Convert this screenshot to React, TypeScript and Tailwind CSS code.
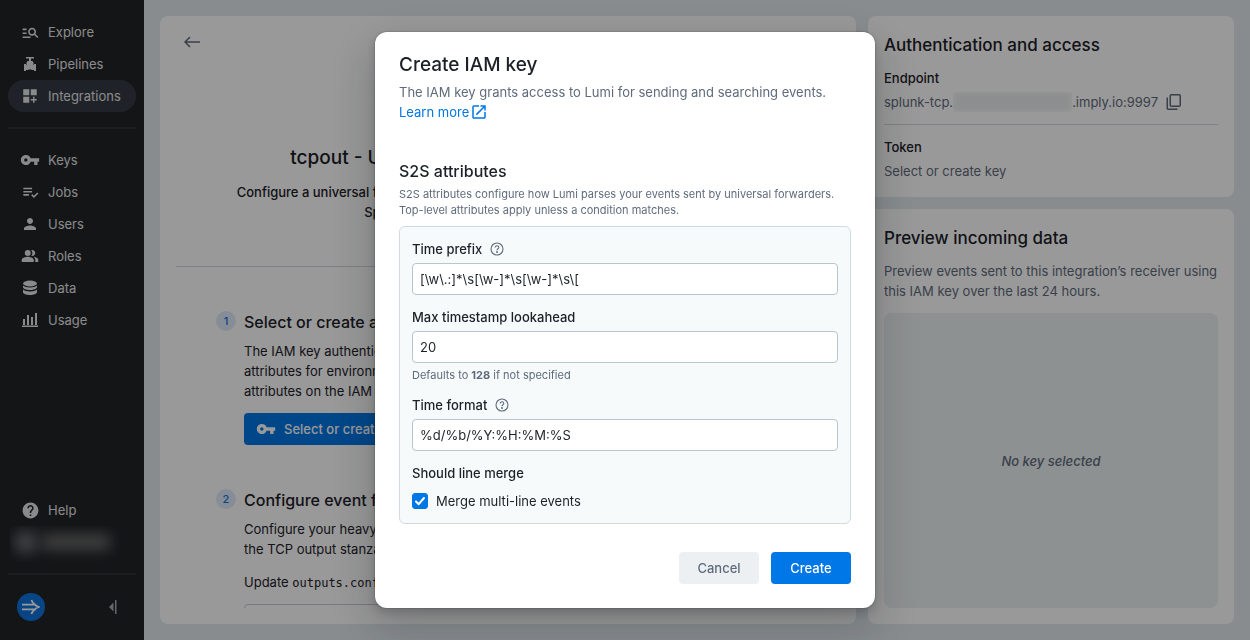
import type { ReactNode } from 'react'
import {
  MdDashboardCustomize,
  MdHelp,
  MdManageSearch,
  MdOpenInNew,
  MdPeopleAlt,
  MdPerson,
  MdPlaylistAddCheck,
  MdVpnKey,
} from 'react-icons/md'

const PipelineIcon = () => (
  <svg viewBox="0 0 16 16" className="size-4" fill="currentColor" aria-hidden="true">
    <path d="M4 1h8v1.500H9V5h1.500l1 1.500V9H12V8h2v7h-2v-1H9.500v-.5h-3v.5H4v1H2V8h2v1h.5V6.500L5.500 5H7V2.500H4z" />
  </svg>
)

const DataIcon = () => (
  <svg viewBox="0 0 16 16" className="size-4" fill="currentColor" aria-hidden="true">
    <ellipse cx="8" cy="3.500" rx="7" ry="2.900" />
    <path d="M1 5.500c1.200 1.300 3.900 2 7 2s5.800-.7 7-2v1.800c0 1.500-3.100 2.700-7 2.700S1 8.800 1 7.300z" />
    <path d="M1 9.600c1.200 1.200 3.900 1.900 7 1.900s5.800-.7 7-1.900v2.700c0 1.500-3.100 2.700-7 2.700s-7-1.200-7-2.700z" />
  </svg>
)

const UsageIcon = () => (
  <svg viewBox="0 0 16 16" className="size-4" fill="currentColor" aria-hidden="true">
    <path d="M0 13.500h16V15H0zM1 7h2v6H1zM5 3h2v10H5zM9 5h2v8H9zM13 1h2v12h-2z" />
  </svg>
)

const CopyIcon = () => (
  <svg viewBox="0 0 16 16" className="size-4" fill="none" stroke="currentColor" strokeWidth="1.500" aria-hidden="true">
    <rect x="4.250" y=".75" width="10" height="11.500" rx="1" />
    <path d="M1.250 3.500v10.750c0 .6.4 1 1 1H11.500" />
  </svg>
)

const HelpCircle = () => (
  <svg viewBox="0 0 14 14" className="size-3.5 text-[#5f6b7c]" fill="none" stroke="currentColor" strokeWidth="1.100" aria-hidden="true">
    <circle cx="7" cy="7" r="6" />
    <path d="M5.200 5.600c0-1 .8-1.800 1.800-1.800s1.800.7 1.800 1.700c0 1.200-1.800 1.400-1.800 2.700" />
    <circle cx="7" cy="10" r=".4" fill="currentColor" />
  </svg>
)

const mainNav = [
  { name: 'Explore', icon: <MdManageSearch className="size-[19px]" /> },
  { name: 'Pipelines', icon: <PipelineIcon /> },
  { name: 'Integrations', icon: <MdDashboardCustomize className="size-[18px]" />, active: true },
]

const adminNav = [
  { name: 'Keys', icon: <MdVpnKey className="size-5" /> },
  { name: 'Jobs', icon: <MdPlaylistAddCheck className="size-[19px]" /> },
  { name: 'Users', icon: <MdPerson className="size-[18px]" /> },
  { name: 'Roles', icon: <MdPeopleAlt className="size-[18px]" /> },
  { name: 'Data', icon: <DataIcon /> },
  { name: 'Usage', icon: <UsageIcon /> },
]

function NavItem({ name, icon, active }: { name: string; icon: ReactNode; active?: boolean }) {
  return (
    <a
      href="#"
      className={`flex h-8 items-center gap-2 rounded-full pl-3 text-[13px] leading-5 ${active ? 'bg-[#343a44]' : ''}`}
    >
      <span className="flex w-5 justify-center">{icon}</span>
      {name}
    </a>
  )
}

function Sidebar() {
  return (
    <nav className="flex w-36 shrink-0 flex-col bg-[#212327] px-2 pt-4 pb-[19px] text-[#e6e6e6]">
      {mainNav.map((item) => (
        <NavItem key={item.name} {...item} />
      ))}
      <hr className="my-[15px] border-t-2 border-[#303236]" />
      {adminNav.map((item) => (
        <NavItem key={item.name} {...item} />
      ))}
      <div className="mt-auto">
        <NavItem name="Help" icon={<MdHelp className="size-[19px]" />} />
        <div className="mr-4 ml-0.5 flex h-9 items-start gap-1 overflow-hidden pt-1">
          <div className="ml-1 size-6 rounded-full bg-[#6a6c70] blur-[7px]" />
          <div className="mt-1 h-4 w-[68px] bg-[#6c6c6c] blur-[7px]" />
        </div>
        <hr className="mt-[11px] border-t-2 border-[#303236]" />
        <div className="mt-[18px] flex items-center justify-between pr-[18px] pl-[9px]">
          <span className="flex size-7 items-center justify-center rounded-full bg-[#0f73dc]">
            <svg viewBox="0 0 18 16" className="h-4 w-[18px]" fill="none" stroke="#fff" strokeWidth="1.800" aria-hidden="true">
              <path d="M0 5.600h14M0 10.400h14M9.500 1c.6 2.200 3.500 5.800 7.300 7-3.800 1.200-6.700 4.800-7.300 7" />
            </svg>
          </span>
          <button type="button" aria-label="Collapse menu">
            <svg viewBox="0 0 12 16" className="h-4 w-3 text-[#a8acb3]" fill="currentColor" aria-hidden="true">
              <path d="M3 8l4.500-4.500v9zM9 1h1.500v14H9z" />
            </svg>
          </button>
        </div>
      </div>
    </nav>
  )
}

function Step({ n, title, children }: { n: number; title: string; children: ReactNode }) {
  return (
    <section className="flex gap-2">
      <span className="mt-px flex size-5 shrink-0 items-center justify-center rounded-full bg-[#e1ecfb] text-[11px] font-medium text-[#0f73dc]">
        {n}
      </span>
      <div className="min-w-0 flex-1 text-[13px] leading-5">
        <h3 className="mb-[7px] text-base leading-6 font-medium">{title}</h3>
        {children}
      </div>
    </section>
  )
}

function Guide() {
  return (
    <main className="min-w-0 flex-1 overflow-hidden rounded-lg bg-white px-4 py-4">
      <div className="h-full overflow-hidden">
        <button type="button" aria-label="Back" className="ml-2 flex h-5 items-center text-[#5f6b7c]">
          <svg viewBox="0 0 16 12" className="h-3 w-4" fill="none" stroke="currentColor" strokeWidth="1.500" aria-hidden="true">
            <path d="M16 6H1M6 1L1 6l5 5" />
          </svg>
        </button>
        <header className="mt-[94px] border-b border-[#d3d8de] pb-11 text-center">
          <h1 className="text-[19px] leading-6 font-medium">tcpout - Universal forwarder to a Splunk indexer</h1>
          <p className="mx-auto mt-3 max-w-[560px] text-[13px] leading-5 font-medium">
            Configure a universal forwarder or a heavy forwarder to send your events to Lumi using
            <br />
            Splunk-to-Splunk protocol via TCP connection
          </p>
        </header>
        <div className="mx-10 mt-[43px] flex flex-col gap-[43px]">
          <Step n={1} title="Select or create an IAM key">
            <p>
              The IAM key authenticates your forwarder with Lumi. You can use
              <br />
              attributes for environments, teams and other groups. Set these
              <br />
              attributes on the IAM key to tag the incoming events.
            </p>
            <button type="button" className="mt-3 flex h-8 items-center gap-2 rounded bg-[#0077e6] px-3 font-medium text-white">
              <MdVpnKey className="size-5" />
              Select or create IAM key
            </button>
          </Step>
          <Step n={2} title="Configure event forwarding">
            <p>
              Configure your heavy forwarder or universal forwarder, and add
              <br />
              the TCP output stanza to send events.
            </p>
            <p className="mt-[13px]">
              Update <code className="font-['DejaVu_Sans_Mono',monospace] text-xs">outputs.conf</code> as follows:
            </p>
            <div className="mt-3 h-40 rounded border border-[#c5cbd3]" />
          </Step>
        </div>
      </div>
    </main>
  )
}

function SidePanels() {
  return (
    <aside className="flex w-[366px] shrink-0 flex-col gap-3 text-[13px] leading-5">
      <section className="rounded-lg bg-white p-4">
        <h2 className="pt-px text-[17px] leading-6 font-medium">Authentication and access</h2>
        <h3 className="mt-[11px] font-medium">Endpoint</h3>
        <div className="mt-1 flex items-center text-[#5f6b7c]">
          splunk-tcp.
          <span className="w-[119px] overflow-hidden">
            <span className="block h-5 bg-[#ebedee] blur-[3px]" />
          </span>
          .imply.io:9997
          <button type="button" aria-label="Copy endpoint" className="ml-2">
            <CopyIcon />
          </button>
        </div>
        <hr className="my-3 border-[#d3d8de]" />
        <h3 className="font-medium">Token</h3>
        <p className="mt-1 text-[#5f6b7c]">Select or create key</p>
      </section>
      <section className="flex flex-1 flex-col rounded-lg bg-white p-4">
        <h2 className="pt-px text-[17px] leading-6 font-medium">Preview incoming data</h2>
        <p className="mt-[11px] text-[#5f6b7c]">
          Preview events sent to this integration’s receiver using this IAM key over the last 24 hours.
        </p>
        <div className="mt-3 flex flex-1 items-center justify-center rounded-lg bg-[#edf2f3] font-medium text-[#5f6b7c] italic">
          No key selected
        </div>
      </section>
    </aside>
  )
}

function Field({ id, label, value, help, children }: { id: string; label: string; value: string; help?: boolean; children?: ReactNode }) {
  return (
    <div>
      <div className="flex items-center gap-2">
        <label htmlFor={id} className="font-medium">
          {label}
        </label>
        {help && (
          <button type="button" aria-label={`About ${label}`}>
            <HelpCircle />
          </button>
        )}
      </div>
      <input
        id={id}
        defaultValue={value}
        className="mt-1 block h-8 w-full rounded border border-[#b8c6d0] bg-white px-[7px]"
      />
      {children}
    </div>
  )
}

function CreateKeyDialog() {
  return (
    <div className="fixed inset-0 flex items-center justify-center bg-black/40">
      <div
        role="dialog"
        aria-labelledby="dialog-title"
        className="w-full max-w-[500px] rounded-xl bg-white px-6 pt-5 pb-6 text-[13px] leading-5 shadow-[0_0_0_1px_rgba(17,20,24,0.1),0_4px_8px_rgba(17,20,24,0.2),0_18px_46px_6px_rgba(17,20,24,0.2)]"
      >
        <h2 id="dialog-title" className="text-[19px] leading-[26px] font-medium">
          Create IAM key
        </h2>
        <p className="mt-1 text-[#5f6b7c]">
          The IAM key grants access to Lumi for sending and searching events.
        </p>
        <a href="#" className="flex w-fit items-center gap-px text-[#0077e6]">
          Learn more <MdOpenInNew className="size-[18px]" />
        </a>
        <h3 className="mt-[37px] text-base leading-6 font-medium">S2S attributes</h3>
        <p className="mt-[3px] text-[11px] leading-4 text-[#5f6b7c]">
          S2S attributes configure how Lumi parses your events sent by universal forwarders. Top-level attributes apply
          unless a condition matches.
        </p>
        <form className="mt-2 flex flex-col gap-3 rounded-md border border-[#d0dae0] bg-[#f6fafb] p-3">
          <Field id="time-prefix" label="Time prefix" value="[\w\.:]*\s[\w-]*\s[\w-]*\s\[" help />
          <Field id="lookahead" label="Max timestamp lookahead" value="20">
            <p className="mt-1 text-[11px] leading-4 text-[#5f6b7c]">
              Defaults to <b className="font-bold">128</b> if not specified
            </p>
          </Field>
          <Field id="time-format" label="Time format" value="%d/%b/%Y:%H:%M:%S" help />
          <fieldset>
            <legend className="font-medium">Should line merge</legend>
            <label className="mt-2 flex items-center gap-2">
              <span className="relative flex size-4">
                <input type="checkbox" defaultChecked className="size-4 appearance-none rounded-[3px] border border-[#b8c6d0] checked:border-[#0077e6] checked:bg-[#0077e6]" />
                <svg viewBox="0 0 16 16" className="pointer-events-none absolute inset-0" fill="none" stroke="#fff" strokeWidth="2" strokeLinecap="round" strokeLinejoin="round" aria-hidden="true">
                  <path d="M4 8.500l2.700 2.700L12 5" />
                </svg>
              </span>
              Merge multi-line events
            </label>
          </fieldset>
        </form>
        <div className="mt-7 flex justify-end gap-3 font-medium">
          <button type="button" className="h-8 w-20 rounded bg-[#edf0f3] text-[#5f6b7c]">
            Cancel
          </button>
          <button type="button" className="h-8 w-20 rounded bg-[#0077e6] text-white">
            Create
          </button>
        </div>
      </div>
    </div>
  )
}

export default function App() {
  return (
    <div className="flex h-screen overflow-hidden bg-[#e3eaef] font-[Inter,sans-serif] text-[#1c2127]">
      <Sidebar />
      <div className="flex min-w-0 flex-1 gap-3 p-4">
        <Guide />
        <SidePanels />
      </div>
      <CreateKeyDialog />
    </div>
  )
}
